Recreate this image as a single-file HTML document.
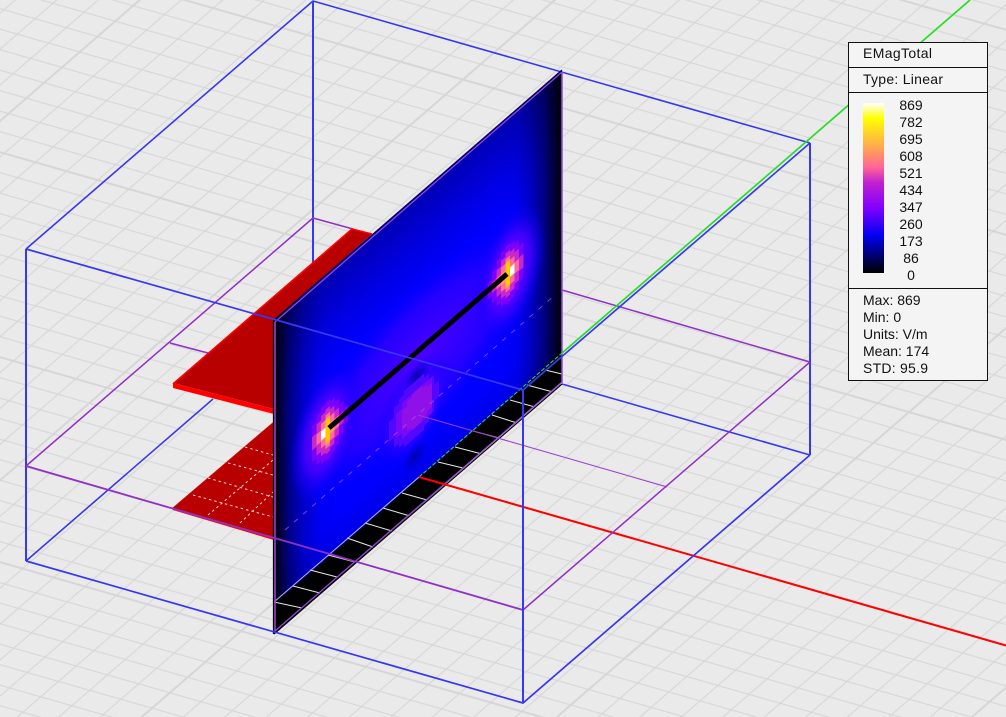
<!DOCTYPE html>
<html><head><meta charset="utf-8"><title>EMagTotal</title>
<style>html,body{margin:0;padding:0;background:#eaeaea;overflow:hidden;width:1006px;height:717px}svg{display:block}
text{font-family:"Liberation Sans",sans-serif;font-size:14px;fill:#111}</style></head>
<body>
<svg xmlns="http://www.w3.org/2000/svg" width="1006" height="717" viewBox="0 0 1006 717">
<defs>
<pattern id="ga" patternUnits="userSpaceOnUse" width="60" height="197.1" patternTransform="translate(419 477) rotate(15.96)">
<g fill="#d6d6d6">
<rect x="0" y="0" width="60" height="1"/><rect x="0" y="196.1" width="60" height="1"/>
<rect x="0" y="19.16" width="60" height="1.1"/><rect x="0" y="38.87" width="60" height="1.1"/><rect x="0" y="58.58" width="60" height="1.1"/><rect x="0" y="78.29" width="60" height="1.1"/><rect x="0" y="98" width="60" height="1.1"/><rect x="0" y="117.71" width="60" height="1.1"/><rect x="0" y="137.42" width="60" height="1.1"/><rect x="0" y="157.13" width="60" height="1.1"/><rect x="0" y="176.84" width="60" height="1.1"/>
</g>
</pattern>
<pattern id="gb" patternUnits="userSpaceOnUse" width="60" height="271.7" patternTransform="translate(419 477) rotate(-40.89)">
<g fill="#d6d6d6">
<rect x="0" y="0" width="60" height="1"/><rect x="0" y="270.7" width="60" height="1"/>
<rect x="0" y="26.62" width="60" height="1.1"/><rect x="0" y="53.79" width="60" height="1.1"/><rect x="0" y="80.96" width="60" height="1.1"/><rect x="0" y="108.13" width="60" height="1.1"/><rect x="0" y="135.3" width="60" height="1.1"/><rect x="0" y="162.47" width="60" height="1.1"/><rect x="0" y="189.64" width="60" height="1.1"/><rect x="0" y="216.81" width="60" height="1.1"/><rect x="0" y="243.98" width="60" height="1.1"/>
</g>
</pattern>
<linearGradient id="fu" x1="0" x2="1" y1="0" y2="0">
<stop offset="0" stop-color="#000"/><stop offset=".05" stop-color="#000080"/><stop offset=".1" stop-color="#0000c8"/><stop offset=".16" stop-color="#0000f4"/><stop offset=".24" stop-color="#00f"/><stop offset=".78" stop-color="#00f"/><stop offset=".84" stop-color="#0000f4"/><stop offset=".89" stop-color="#0000c8"/><stop offset=".94" stop-color="#000080"/><stop offset="1" stop-color="#000"/>
</linearGradient>
<linearGradient id="fv" x1="0" x2="0" y1="0" y2="1">
<stop offset="0" stop-color="#000" stop-opacity=".3"/><stop offset=".2" stop-color="#000" stop-opacity=".1"/><stop offset=".34" stop-color="#000" stop-opacity="0"/><stop offset=".88" stop-color="#000" stop-opacity="0"/><stop offset="1" stop-color="#000" stop-opacity=".1"/>
</linearGradient>
<radialGradient id="glow"><stop offset="0" stop-color="#4c00ff"/><stop offset=".6" stop-color="#3400ff" stop-opacity=".7"/><stop offset="1" stop-color="#0000ff" stop-opacity="0"/></radialGradient>
<radialGradient id="spotO"><stop offset="0" stop-color="#7800ff"/><stop offset=".55" stop-color="#5000ff" stop-opacity=".8"/><stop offset="1" stop-color="#0000ff" stop-opacity="0"/></radialGradient>
<radialGradient id="dark"><stop offset="0" stop-color="#0000a0" stop-opacity=".85"/><stop offset="1" stop-color="#0000c0" stop-opacity="0"/></radialGradient>
<linearGradient id="bar" x1="0" x2="0" y1="0" y2="1">
<stop offset="0" stop-color="#fff"/><stop offset=".09" stop-color="#ffff00"/><stop offset=".26" stop-color="#ffa850"/><stop offset=".38" stop-color="#ff6496"/><stop offset=".47" stop-color="#c020d0"/><stop offset=".62" stop-color="#8000ff"/><stop offset=".78" stop-color="#0000f0"/><stop offset="1" stop-color="#000"/>
</linearGradient>
<g id="spot">
<path fill="#7c00ff" d="M-12-16h4v32h-4zM-8-22h4v44h-4zM-4-25h4v50h-4zM0-26h4v52h-4zM4-24h4v48h-4zM8-20h4v40h-4zM12-14h4v28h-4zM16-7h4v14h-4z"/>
<path fill="#c828c8" d="M-12-6h4v12h-4zM-8-14h4v28h-4zM-4-18h4v36h-4zM0-20h4v40h-4zM4-17h4v34h-4zM8-12h4v24h-4zM12-5h4v10h-4z"/>
<path fill="#ff6aa0" d="M-8-5h4v10h-4zM-4-11h4v22h-4zM0-15h4v30h-4zM4-11h4v22h-4zM8-5h4v10h-4z"/>
<path fill="#ffa050" d="M-4-5h4v10h-4zM0-12h4v24h-4zM4-5h4v10h-4z"/>
<path fill="#ffc800" d="M0-10h4v20h-4z"/>
<path fill="#fff" d="M-4-4h4v8h-4z"/>
</g>
</defs>

<rect width="1006" height="717" fill="#eaeaea"/>

<!-- floor grid -->
<rect width="1006" height="717" fill="url(#ga)"/>
<rect width="1006" height="717" fill="url(#gb)"/>

<!-- back box lines -->
<g fill="none" stroke-linejoin="round">
<path stroke="#3838f4" stroke-width="1.6" d="M26 249L313 1L810 143M26 561L213 399M562 384L810 455"/>
<path stroke="#3838f4" stroke-width="2" d="M313 1V264M26 249V561M810 143V455"/>
<path stroke="#9030c8" stroke-width="1.5" d="M26 466L313 218L353 229M562 290L810 362M170 343L208 353"/>
</g>

<!-- top red sheet -->
<polygon points="173,383 352,229 372,234 274,320 274,409" fill="#b80000"/>
<polygon points="173,383 274,409 274,414 173,388" fill="#ff0000"/>
<path d="M173 384L352 229L372 234" fill="none" stroke="#ff0000" stroke-width="1.6"/>

<!-- bottom red sheet -->
<polygon points="173,508 274,422 274,539" fill="#b80000"/>
<path d="M173 508L274 422" fill="none" stroke="#d00000" stroke-width="1"/>
<path d="M173 509L274 539" fill="none" stroke="#ff0000" stroke-width="2"/>
<path d="M245 447L273 455M228 463L273 475M208 478L273 497M193 495L273 517M208 515L273 460M240 523L273 492" fill="none" stroke="#f0d8d8" stroke-width="1" stroke-dasharray="2.5 3"/>

<!-- plane -->
<polygon points="274,602 562,354 562,382 274,634" fill="#000"/>
<g transform="matrix(1 -.868 0 1 274 320)">
<rect x="0" y="0" width="288" height="284" fill="url(#fu)"/>
<rect x="0" y="0" width="288" height="284" fill="url(#fv)"/>
<ellipse cx="143" cy="165" rx="132" ry="84" fill="url(#glow)"/>
<ellipse cx="51" cy="157" rx="36" ry="62" fill="url(#spotO)"/>
<ellipse cx="236" cy="157" rx="36" ry="62" fill="url(#spotO)"/>
<ellipse cx="140" cy="212" rx="40" ry="48" fill="url(#glow)"/>
<ellipse cx="143" cy="181" rx="13" ry="13" fill="url(#dark)"/>
<ellipse cx="141" cy="259" rx="13" ry="13" fill="url(#dark)"/>
<path fill="#5208ff" d="M115 202h5v20h-5zM120 192h5v40h-5zM125 188h5v48h-5zM130 184h20v56h-20zM150 188h5v48h-5zM155 194h5v36h-5zM160 204h5v16h-5z"/>
<path fill="#7a08f8" d="M122 200h6v24h-6zM128 194h30v36h-30z"/>
<path fill="#9010e8" d="M128 202h5v20h-5zM133 197h5v30h-5zM138 194h10v36h-10zM148 197h5v30h-5zM153 200h5v24h-5z"/>
<use href="#spot" transform="translate(51.5 157) scale(1.12)"/>
<use href="#spot" transform="translate(236 157) scale(-1.12 1.12)"/>
</g>
<!-- wire -->
<path d="M329 428L507 274" stroke="#000" stroke-width="5" fill="none"/>
<!-- strip ticks -->
<path d="M274 602L302 608M293 586L320 593M310 570L337 577M328 555L355 562M347 538L373 547M365 523L392 531M383 508L410 516M402 493L427 500M438 462L463 468M455 447L482 454M473 431L499 438M492 415L517 423M510 400L535 407M527 385L553 392M545 370L562 374" stroke="#e6e6e6" stroke-width="1" fill="none"/>
<path d="M274 602L419 477" stroke="#b8b8e8" stroke-width="1" fill="none"/>
<!-- plane outline -->
<path d="M273.500 320V634" stroke="#000" stroke-width="1.2"/>
<path d="M274 320L562 70" stroke="#000050" stroke-width="1.2" fill="none"/>
<path d="M274 634L562 384" stroke="#000" stroke-width="1.2" fill="none"/>
<g fill="none" stroke="#9a48dc">
<path stroke-width="1.2" d="M275 322L562 72M275 631L562 382"/>
<path stroke-width="1.5" d="M275 322V631M562 72V383"/>
<path stroke-width="1" stroke-dasharray="5 7" stroke="#b050e0" stroke-opacity=".75" d="M285 530L555 295"/>
</g>

<!-- axes -->
<path d="M419 477L562 353" stroke="#30e030" stroke-width="1" stroke-dasharray="4 2" fill="none"/>
<path d="M562 353L970 0" stroke="#22e022" stroke-width="1.6" fill="none"/>
<path d="M419 477L1006 645.500" stroke="#ff0000" stroke-width="2" fill="none"/>

<!-- front box lines -->
<g fill="none">
<path stroke="#9030c8" stroke-width="1.8" d="M26 466L523 610"/>
<path stroke="#9030c8" stroke-width="1.5" d="M523 610L810 362"/>
<path stroke="#9a3ad0" stroke-width="1" d="M418 415L667 487"/>
<path stroke="#3838f4" stroke-width="1.7" d="M26 249L523 390L810 143M26 561L523 703L810 455"/>
<path stroke="#3838f4" stroke-width="2" d="M523 390V703"/>
</g>

<!-- legend -->
<rect x="848.500" y="42.500" width="139" height="338" fill="#f4f4f4" stroke="#111" stroke-width="1"/>
<path d="M848 67.500H988M848 92.500H988M848 288.500H988" stroke="#111" stroke-width="1"/>
<text x="863" y="58" textLength="69">EMagTotal</text>
<text x="863" y="84" textLength="80">Type: Linear</text>
<rect x="863" y="103" width="21" height="170" fill="url(#bar)"/>
<g text-anchor="middle">
<text x="911" y="110">869</text>
<text x="911" y="127">782</text>
<text x="911" y="144">695</text>
<text x="911" y="161">608</text>
<text x="911" y="178">521</text>
<text x="911" y="195">434</text>
<text x="911" y="212">347</text>
<text x="911" y="229">260</text>
<text x="911" y="246">173</text>
<text x="911" y="263">86</text>
<text x="911" y="280">0</text>
</g>
<text x="863" y="305">Max: 869</text>
<text x="863" y="322">Min: 0</text>
<text x="863" y="339">Units: V/m</text>
<text x="863" y="356">Mean: 174</text>
<text x="863" y="373" textLength="65">STD: 95.9</text>
</svg>
</body></html>
